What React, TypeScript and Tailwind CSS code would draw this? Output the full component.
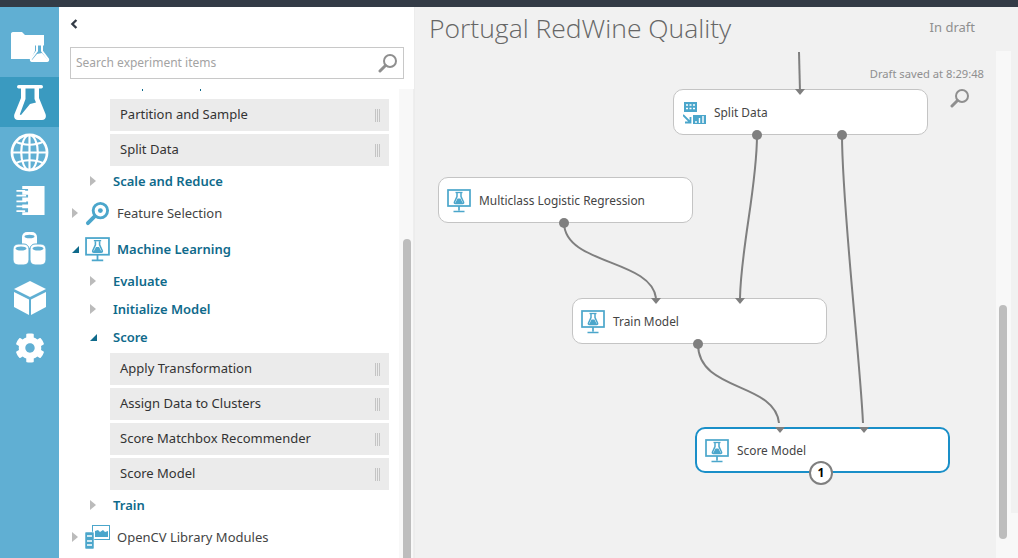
import React from 'react';
import { FaCog } from 'react-icons/fa';

const font = { fontFamily: '"Noto Sans", "Open Sans", sans-serif' };

function FlaskIcon({ className }: { className?: string }) {
    return (
        <svg viewBox="0 0 32 35" className={className}>
            <rect x="3" y="0" width="26" height="3.500" rx="1.700" fill="white" />
            <path d="M7 3h18v10l6.500 16c1.200 3.500-.5 6-3.500 6H4c-3 0-4.700-2.500-3.500-6L7 13z" fill="white" />
            <path d="M11.500 3.500h9V14l1.500 3.500-6 1.500-9 11-1.200-.5 5.700-15.500z" fill="#3a9ac0" />
        </svg>
    );
}

function ModuleIcon({ className }: { className?: string }) {
    return (
        <svg viewBox="0 0 24 24" className={className} fill="none">
            <rect x="1" y="1" width="22" height="16" stroke="#4ba6cb" strokeWidth="1.700" />
            <path d="M8.500 3.500h7" stroke="#4ba6cb" strokeWidth="1.300" />
            <path d="M10 4v3.500L7.500 13c-.4 1 0 1.500 1 1.500h7c1 0 1.400-.5 1-1.500L14 7.500V4" stroke="#4ba6cb" strokeWidth="1.500" />
            <path d="M8 14.500l2.500-5 3 0 2.500 5z" fill="#4ba6cb" />
            <path d="M12 17v4.500M6.500 22.500h11" stroke="#4ba6cb" strokeWidth="1.700" />
        </svg>
    );
}

function SplitIcon() {
    return (
        <svg viewBox="0 0 23 22" className="w-[23px] h-[22px]" fill="none">
            <rect x="1" y="0" width="13" height="10" fill="#4ba6cb" />
            <path d="M3 3h2M6.500 3h2M10 3h2M3 6.500h2M6.500 6.500h2M10 6.500h2" stroke="white" strokeWidth="1.500" />
            <path d="M0 13l7 7M7.500 15v5.500H2" stroke="#4ba6cb" strokeWidth="1.800" />
            <rect x="10" y="13" width="13" height="9" fill="#4ba6cb" />
            <path d="M13 21v-2M16.500 21v-5M20 21v-7" stroke="white" strokeWidth="1.400" />
        </svg>
    );
}

function SearchGlass({ className }: { className?: string }) {
    return (
        <svg viewBox="0 0 20 20" className={className} fill="none">
            <circle cx="12" cy="8" r="6" stroke="#8f8f8f" strokeWidth="2" />
            <path d="M7.500 12.500L2 18" stroke="#8f8f8f" strokeWidth="3" strokeLinecap="round" />
        </svg>
    );
}

function Arrow({ open }: { open?: boolean }) {
    if (open) {
        return <div className="w-0 h-0 border-l-[7px] border-l-transparent border-b-[7px] border-b-[#0f6a8b]" />;
    }
    return <div className="w-0 h-0 border-y-[5px] border-y-transparent border-l-[6px] border-l-[#bbbbbb]" />;
}

function Leaf({ label }: { label: string }) {
    return (
        <div className="ml-[51px] mr-[10px] h-[32px] mb-[3px] bg-[#ebebeb] flex items-center justify-between pl-[10px] pr-[9px] text-[13px] text-[#333333]">
            <span>{label}</span>
            <div className="flex gap-[1px]">
                <div className="w-[1px] h-[13px] bg-[#c4c4c4]" />
                <div className="w-[1px] h-[13px] bg-[#c4c4c4]" />
                <div className="w-[1px] h-[13px] bg-[#c4c4c4]" />
            </div>
        </div>
    );
}

function SubHeader({ label, open, className }: { label: string; open?: boolean; className: string }) {
    return (
        <div className={`flex items-center ml-[31px] text-[13px] font-semibold text-[#0f6a8b] ${className}`}>
            <div className="w-[23px] flex"><Arrow open={open} /></div>
            <span className="pt-[2px]">{label}</span>
        </div>
    );
}

function Node({ label, className, icon, children }: { label: string; className: string; icon?: React.ReactNode; children?: React.ReactNode }) {
    return (
        <div className={`absolute w-[255px] h-[46px] pt-[2px] bg-white rounded-[10px] flex items-center text-[11.900px] text-[#444444] ${className}`}>
            <div className="w-[32px] flex justify-end mr-[8px]">{icon || <ModuleIcon className="w-[24px] h-[24px]" />}</div>
            <span>{label}</span>
            {children}
        </div>
    );
}

function Sidebar() {
    return (
        <div className="w-[355px] shrink-0 bg-white flex flex-col">
            <div className="h-[40px] pl-[11px] pt-[3px] shrink-0">
                <svg viewBox="0 0 10 14" className="w-[8px] h-[12px] mt-[8px]" fill="none">
                    <path d="M8 2L3 7l5 5" stroke="#333b46" strokeWidth="3" />
                </svg>
            </div>
            <div className="mx-[11px] w-[334px] h-[32px] shrink-0 border border-[#c8c8c8] flex items-center justify-between pl-[5px] pr-[5px]">
                <span className="text-[12px] text-[#a3a3a3]">Search experiment items</span>
                <SearchGlass className="w-[20px] h-[20px]" />
            </div>
            <div className="flex-1 flex min-h-0 mt-[10px]">
                <div className="flex-1 overflow-hidden">
                    {/* descenders of the row scrolled out above */}
                    <div className="h-[10px] relative">
                        <div className="absolute left-[83px] top-0 w-[1px] h-[2px] bg-[#0f6a8b]" />
                        <div className="absolute left-[141px] top-0 w-[1px] h-[2px] bg-[#0f6a8b]" />
                    </div>
                    <Leaf label="Partition and Sample" />
                    <Leaf label="Split Data" />
                    <SubHeader label="Scale and Reduce" className="h-[24px] mb-[2px]" />
                    <div className="flex items-center h-[36px] ml-[13px] text-[13px] text-[#444444]">
                        <div className="w-[13px] flex"><Arrow /></div>
                        <svg viewBox="0 0 26 26" className="w-[25px] h-[25px] mr-[7px]" fill="none">
                            <circle cx="16" cy="10" r="7.500" stroke="#4ba6cb" strokeWidth="3" />
                            <circle cx="16" cy="10" r="2.500" fill="#4ba6cb" />
                            <path d="M10 16l-7 7" stroke="#4ba6cb" strokeWidth="4" strokeLinecap="round" />
                        </svg>
                        <span className="pt-[2px]">Feature Selection</span>
                    </div>
                    <div className="flex items-center h-[36px] ml-[13px] text-[13px] font-semibold text-[#0f6a8b]">
                        <div className="w-[13px] flex"><Arrow open /></div>
                        <ModuleIcon className="w-[25px] h-[25px] mr-[7px]" />
                        <span className="pt-[2px]">Machine Learning</span>
                    </div>
                    <SubHeader label="Evaluate" className="h-[28px]" />
                    <SubHeader label="Initialize Model" className="h-[28px]" />
                    <SubHeader label="Score" open className="h-[28px] mb-[2px]" />
                    <Leaf label="Apply Transformation" />
                    <Leaf label="Assign Data to Clusters" />
                    <Leaf label="Score Matchbox Recommender" />
                    <Leaf label="Score Model" />
                    <SubHeader label="Train" className="h-[24px]" />
                    <div className="flex items-center h-[36px] mt-[2px] ml-[13px] text-[13px] text-[#444444]">
                        <div className="w-[13px] flex"><Arrow /></div>
                        <svg viewBox="0 0 25 25" className="w-[25px] h-[25px] mr-[7px]" fill="none">
                            <rect x="7.500" y="0.500" width="17" height="14" stroke="#4ba6cb" strokeWidth="1" />
                            <path d="M10 12V6l3-1 2 2 3-2 2 2 3-1v6z" fill="#4ba6cb" />
                            <rect x="0" y="7" width="9" height="17" rx="1" fill="#4ba6cb" stroke="white" strokeWidth="0.500" />
                            <path d="M2 11h5M2 16h5M2 20h5" stroke="white" strokeWidth="1.500" />
                        </svg>
                        <span className="pt-[2px]">OpenCV Library Modules</span>
                    </div>
                </div>
                <div className="w-[15px] shrink-0 bg-[#f8f8f8] border-r border-[#eeeeee] relative">
                    <div className="absolute left-[4px] top-[150px] bottom-0 w-[8px] bg-[#bdbdbd] rounded-t-[4px]" />
                </div>
            </div>
        </div>
    );
}

function NavRail() {
    return (
        <div className="w-[59px] shrink-0 bg-[#60afd3] flex flex-col">
            <div className="h-[70px] flex items-start justify-center pl-[1px] pt-[24px]">
                <svg viewBox="0 0 40 32" className="w-[40px] h-[32px]">
                    <path d="M1 3c0-1 .5-2 2-2h9l3 3h19v10h-4l-9 14H1z" fill="white" />
                    <path d="M25 13h9v5l8 14H19l6-12z" fill="#60afd3" />
                    <path d="M25 13.500h9M27 14v6l-6 8c-.5 1 0 2 1 2h15c1 0 1.500-1 1-2l-6-8v-6" fill="none" stroke="white" strokeWidth="2" />
                    <path d="M22 29l5-6 5-1 6 7z" fill="white" />
                </svg>
            </div>
            <div className="h-[50px] bg-[#3a9ac0] flex items-center justify-center">
                <FlaskIcon className="w-[32px] h-[35px]" />
            </div>
            <div className="h-[50px] flex items-center justify-center">
                <svg viewBox="0 0 40 40" className="w-[39px] h-[39px]" fill="none" stroke="white">
                    <circle cx="20" cy="20" r="18" strokeWidth="2.800" />
                    <ellipse cx="20" cy="20" rx="8.500" ry="18" strokeWidth="2.200" />
                    <path d="M20 2v36M2 20h36" strokeWidth="2.200" />
                    <path d="M6 9c8 4 20 4 28 0M6 31c8-4 20-4 28 0" strokeWidth="2.200" />
                </svg>
            </div>
            <div className="h-[46px] flex items-center justify-center pt-[1px]">
                <svg viewBox="0 0 30 32" className="w-[30px] h-[31px]">
                    <path d="M7 1h23v30H7v-3h6v-4H7v-4h6v-3H7v-4h6v-3H7V6h6V4H7z" fill="white" />
                    <path d="M1 6h9M1 11h10M1 17h10M1 22h10M1 27h9" stroke="white" strokeWidth="1.800" fill="none" />
                </svg>
            </div>
            <div className="h-[50px] flex items-center justify-center">
                <svg viewBox="0 0 33 35" className="w-[33px] h-[35px]">
                    <rect x="9" y="1" width="15" height="16" rx="5" fill="white" />
                    <ellipse cx="16.500" cy="5.500" rx="5" ry="1.800" fill="#60afd3" />
                    <rect x="0" y="13" width="16" height="21" rx="5" fill="white" stroke="#60afd3" strokeWidth="1" />
                    <ellipse cx="8" cy="17.500" rx="5.500" ry="2" fill="#60afd3" />
                    <rect x="17" y="13" width="16" height="21" rx="5" fill="white" stroke="#60afd3" strokeWidth="1" />
                    <ellipse cx="25" cy="17.500" rx="5.500" ry="2" fill="#60afd3" />
                </svg>
            </div>
            <div className="h-[50px] flex items-center justify-center">
                <svg viewBox="0 0 32 34" className="w-[32px] h-[34px]" fill="white">
                    <path d="M16 0L32 8 16 16 0 8z" />
                    <path d="M0 11l15 7.500V34L0 26z" />
                    <path d="M32 11l-15 7.500V34l15-8z" />
                </svg>
            </div>
            <div className="h-[50px] flex items-center justify-center">
                <FaCog className="w-[30px] h-[30px] text-white" />
            </div>
        </div>
    );
}

function Canvas() {
    return (
        <div className="flex-1 bg-[#f1f1f1] relative border-l border-[#ececec]">
            <div className="flex items-start justify-between pl-[14px] pr-[43px] pt-[3px]">
                <h1 className="text-[26.500px] leading-[36px] font-light text-[#666666]" style={{ fontFamily: '"Open Sans", sans-serif' }}>Portugal RedWine Quality</h1>
                <span className="text-[13px] text-[#8f8f8f] mt-[8px]">In draft</span>
            </div>

            <div className="absolute left-[581px] right-0 top-[44px] bottom-0 flex">
                <div className="w-[15px] bg-[#f8f8f8] relative">
                    <div className="absolute left-[3px] top-[254px] h-[234px] w-[8px] bg-[#bdbdbd] rounded-[4px]" />
                </div>
                <div className="flex-1 flex flex-col">
                    <div className="flex-1" />
                    <div className="h-[45px] bg-[#f8f8f8]" />
                </div>
            </div>

            <div className="absolute right-[34px] top-[59px] text-[11.200px] text-[#8f8f8f]">Draft saved at 8:29:48</div>
            <SearchGlass className="absolute left-[535px] top-[81px] w-[20px] h-[20px]" />

            {/* Connections, coordinates relative to the canvas */}
            <svg className="absolute left-0 top-0 w-[604px] h-[551px]" fill="none" stroke="#7f7f7f" strokeWidth="2">
                <path d="M384 45L385 85" />
                <path d="M342 128C342 180 326 240 325 291" />
                <path d="M427 128C427 200 445 350 448 416" />
                <path d="M149 216C150 258 236 252 241 291" />
                <path d="M283 337C283 385 360 375 364 416" />
            </svg>

            <Node label="Split Data" icon={<SplitIcon />} className="left-[258px] top-[82px] border border-[#c4c4c4]">
                <div className="absolute left-[78px] top-[40px] w-[10px] h-[10px] rounded-full bg-[#7f7f7f]" />
                <div className="absolute left-[163px] top-[40px] w-[10px] h-[10px] rounded-full bg-[#7f7f7f]" />
                <div className="absolute left-[121px] -top-[1px] w-0 h-0 border-x-[5px] border-x-transparent border-t-[6px] border-t-[#7f7f7f]" />
            </Node>
            <Node label="Multiclass Logistic Regression" className="left-[23px] top-[170px] border border-[#c4c4c4]">
                <div className="absolute left-[120px] top-[40px] w-[10px] h-[10px] rounded-full bg-[#7f7f7f]" />
            </Node>
            <Node label="Train Model" className="left-[157px] top-[291px] border border-[#c4c4c4]">
                <div className="absolute left-[78px] -top-[1px] w-0 h-0 border-x-[5px] border-x-transparent border-t-[6px] border-t-[#7f7f7f]" />
                <div className="absolute left-[162px] -top-[1px] w-0 h-0 border-x-[5px] border-x-transparent border-t-[6px] border-t-[#7f7f7f]" />
                <div className="absolute left-[120px] top-[40px] w-[10px] h-[10px] rounded-full bg-[#7f7f7f]" />
            </Node>
            <Node label="Score Model" className="left-[280px] top-[420px] border-2 border-[#1a8fc8]">
                <div className="absolute left-[78px] -top-[2px] w-0 h-0 border-x-[5px] border-x-transparent border-t-[6px] border-t-[#7f7f7f]" />
                <div className="absolute left-[162px] -top-[2px] w-0 h-0 border-x-[5px] border-x-transparent border-t-[6px] border-t-[#7f7f7f]" />
                <div className="absolute left-[112px] top-[32px] w-[24px] h-[24px] rounded-full bg-white border-2 border-[#7f7f7f] flex items-center justify-center text-[12px] font-bold text-black">1</div>
            </Node>
        </div>
    );
}

export default function App() {
    return (
        <div className="w-[1018px] h-[558px] overflow-hidden flex flex-col bg-white" style={font}>
            <div className="h-[7px] shrink-0 bg-[#333b46]" />
            <div className="flex-1 flex min-h-0">
                <NavRail />
                <Sidebar />
                <Canvas />
            </div>
        </div>
    );
}
